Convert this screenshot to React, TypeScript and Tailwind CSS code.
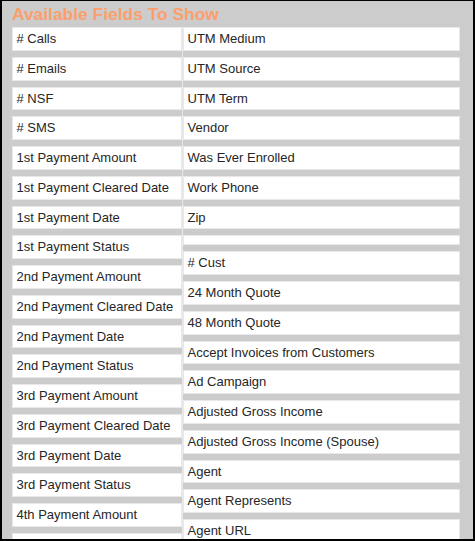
import React from 'react';

const leftFields = [
  '# Calls',
  '# Emails',
  '# NSF',
  '# SMS',
  '1st Payment Amount',
  '1st Payment Cleared Date',
  '1st Payment Date',
  '1st Payment Status',
  '2nd Payment Amount',
  '2nd Payment Cleared Date',
  '2nd Payment Date',
  '2nd Payment Status',
  '3rd Payment Amount',
  '3rd Payment Cleared Date',
  '3rd Payment Date',
  '3rd Payment Status',
  '4th Payment Amount',
  '4th Payment Cleared Date',
];

const rightFields = [
  'UTM Medium',
  'UTM Source',
  'UTM Term',
  'Vendor',
  'Was Ever Enrolled',
  'Work Phone',
  'Zip',
  '',
  '# Cust',
  '24 Month Quote',
  '48 Month Quote',
  'Accept Invoices from Customers',
  'Ad Campaign',
  'Adjusted Gross Income',
  'Adjusted Gross Income (Spouse)',
  'Agent',
  'Agent Represents',
  'Agent URL',
];

const FieldItem: React.FC<{ label: string }> = ({ label }) => {
  // пустой элемент в списке — узкая полоска без текста
  if (!label) {
    return <div className="h-[10px] mb-[6px] bg-white border border-[#e8e8e8]" />;
  }
  return (
    <div className="h-[23.75px] mb-[6px] bg-white border border-[#e8e8e8] pl-[3.5px] text-[13px] leading-[21.75px] text-[#262626] whitespace-nowrap overflow-hidden">
      {label}
    </div>
  );
};

export default function App() {
  return (
    <div
      className="w-[475px] h-[541px] overflow-hidden bg-[#cccccc] border-black border-l-2 border-r-2 border-b-2 border-t"
      style={{ fontFamily: '"Liberation Sans", Arial, sans-serif' }}
    >
      <div className="pl-[10px] h-[26px] pt-[2px] text-[17.4px] leading-[22px] font-bold text-[#fb9f6c]">
        Available Fields To Show
      </div>
      <div className="flex pl-[10px]">
        <div className="w-[170px] shrink-0">
          {leftFields.map((f) => (
            <FieldItem key={f} label={f} />
          ))}
        </div>
        <div className="w-[278px] shrink-0 border-l border-[#e8e8e8]">
          {rightFields.map((f, i) => (
            <FieldItem key={i} label={f} />
          ))}
        </div>
      </div>
    </div>
  );
}
